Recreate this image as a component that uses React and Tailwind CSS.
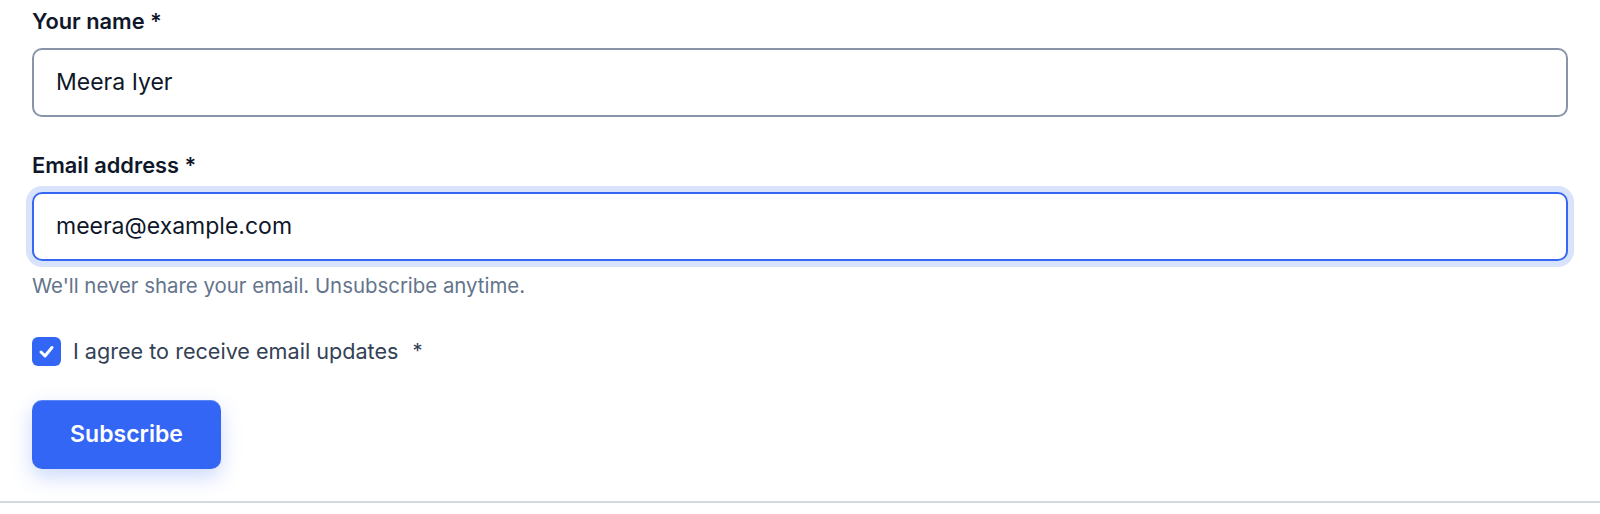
import React from "react";

export default function App() {
  return (
    <div className="w-[1600px] h-[514px] bg-white" style={{ fontFamily: "Inter, 'Noto Sans', sans-serif" }}>
      <div className="px-8 pt-[7px] pb-[32px] border-b-2 border-[#d3d9e1]">
        <label className="block text-[21.8px] leading-[28px] font-semibold text-[#0f172a] mb-[13px]">Your name *</label>
        <div className="h-[69px] rounded-[10px] border-2 border-[#8a94a8] flex items-center px-[22px] text-[23px] text-[#0f172a]">
          Meera Iyer
        </div>

        <label className="block mt-[34px] text-[21.8px] leading-[28px] font-semibold text-[#0f172a] mb-[13px]">Email address *</label>
        <div className="h-[69px] rounded-[10px] border-2 border-[#3567f2] shadow-[0_0_0_6px_#dae3fc] flex items-center px-[22px] text-[23px] text-[#0f172a]">
          meera@example.com
        </div>
        <p className="mt-[11px] text-[20.4px] leading-[28px] text-[#64748b]">We'll never share your email. Unsubscribe anytime.</p>

        <div className="mt-[37px] flex items-center h-[28px]">
          <span className="w-[29px] h-[29px] rounded-[6px] bg-[#3366f5] flex items-center justify-center">
            <svg width="29" height="29" viewBox="0 0 29 29" fill="none">
              <path d="M9 15l4 4 7-8.5" stroke="white" strokeWidth="3" strokeLinecap="round" strokeLinejoin="round" />
            </svg>
          </span>
          <span className="ml-[12px] text-[21.6px] text-[#334155]">I agree to receive email updates</span>
          <span className="ml-[14px] text-[20px] text-[#334155]">*</span>
        </div>

        <button className="mt-[35px] w-[189px] h-[69px] rounded-[10px] bg-[#3366f5] text-white text-[23px] font-semibold shadow-[0_8px_20px_rgba(51,102,245,0.25),inset_0_1px_0_rgba(255,255,255,0.2)]">
          Subscribe
        </button>
      </div>
    </div>
  );
}
